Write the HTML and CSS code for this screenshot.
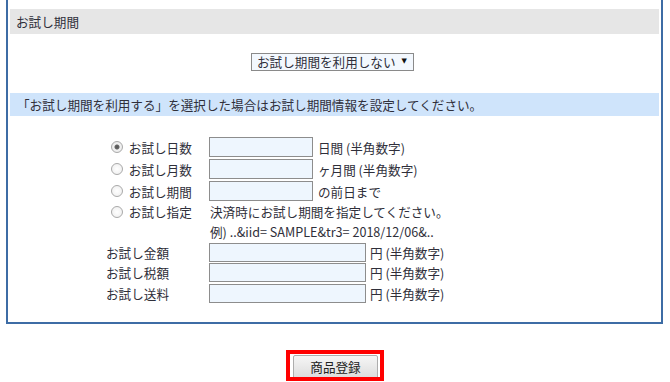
FILE: index.html
```html
<!DOCTYPE html>
<html lang="ja">
<head>
  <meta charset="UTF-8">
  <meta name="viewport" content="width=device-width, initial-scale=1.0">
  <title>お試し期間</title>
  <link rel="stylesheet" href="styles.css">
</head>
<body>
  <div class="panel">
    <div class="panel-head">お試し期間</div>

    <div class="select-row">
      <div class="select">
        <span>お試し期間を利用しない</span>
        <span class="arrow">▼</span>
      </div>
    </div>

    <div class="notice">「お試し期間を利用する」を選択した場合はお試し期間情報を設定してください。</div>

    <div class="form">
      <div class="row">
        <label class="opt"><input type="radio" name="trial" checked> お試し日数</label>
        <input class="field" type="text"><span class="unit">日間 (半角数字)</span>
      </div>
      <div class="row">
        <label class="opt"><input type="radio" name="trial"> お試し月数</label>
        <input class="field" type="text"><span class="unit">ヶ月間 (半角数字)</span>
      </div>
      <div class="row">
        <label class="opt"><input type="radio" name="trial"> お試し期間</label>
        <input class="field" type="text"><span class="unit">の前日まで</span>
      </div>
      <div class="row row-text">
        <label class="opt"><input type="radio" name="trial"> お試し指定</label>
        <div class="note">
          決済時にお試し期間を指定してください。<br>
          例) ..&amp;iid= SAMPLE&amp;tr3= 2018/12/06&amp;..
        </div>
      </div>
      <div class="row row-money">
        <span class="name">お試し金額</span>
        <input class="field wide" type="text"><span class="unit">円 (半角数字)</span>
      </div>
      <div class="row row-money">
        <span class="name">お試し税額</span>
        <input class="field wide" type="text"><span class="unit">円 (半角数字)</span>
      </div>
      <div class="row row-money">
        <span class="name">お試し送料</span>
        <input class="field wide" type="text"><span class="unit">円 (半角数字)</span>
      </div>
    </div>
  </div>

  <div class="actions">
    <span class="mark"><button class="btn">商品登録</button></span>
  </div>
</body>
</html>
```

FILE: styles.css
```css
body {
    margin: 0;
    font-family: "Noto Sans CJK JP", "Noto Sans", sans-serif;
    font-size: 12.6px;
    color: #2f2f3a;
    background-color: #ffffff;
}

.panel {
    margin-left: 6px;
    width: 657px;
    box-sizing: border-box;
    border: 2px solid #3d6ca5;
    border-top: none;
    padding: 9px 2px 18px;
}

.panel-head {
    height: 25px;
    line-height: 25px;
    padding-left: 6px;
    background-color: #e6e6e6;
}

.select-row {
    display: flex;
    justify-content: center;
    padding: 19px 4px 22px 0;
}

.select {
    display: flex;
    align-items: center;
    justify-content: space-between;
    width: 163px;
    height: 18px;
    box-sizing: border-box;
    padding: 0 6px 0 5px;
    border: 1px solid #8a8a8a;
    background-color: #f3f8fe;
    line-height: 16px;
}

.arrow {
    font-family: "DejaVu Sans", sans-serif;
    font-size: 7px;
    color: #111;
    margin-top: -2px;
}

.notice {
    height: 23px;
    line-height: 23px;
    padding-left: 7px;
    background-color: #cfe4fb;
}

.form {
    padding: 20px 0 0 96px;
}

.row {
    display: flex;
    align-items: center;
    height: 22px;
}

.row-text {
    align-items: flex-start;
    height: 40px;
    line-height: 20px;
}

.row-money {
    height: 20.5px;
}

.opt {
    display: flex;
    align-items: center;
    width: 103px;
    padding-left: 5px;
    box-sizing: border-box;
    white-space: pre;
}

.opt input {
    appearance: none;
    -webkit-appearance: none;
    width: 12px;
    height: 12px;
    margin: 0 3px 0 0;
    border: 1px solid #a9a9a9;
    border-radius: 50%;
    background: radial-gradient(circle, #ffffff 0%, #ececec 100%);
    box-sizing: border-box;
}

.opt input:checked {
    background: radial-gradient(circle, #555 0, #666 2px, #f2f2f2 3px, #e6e6e6 100%);
}

.name {
    width: 103px;
}

.field {
    width: 104px;
    height: 20px;
    margin: 0;
    padding: 0;
    box-sizing: border-box;
    border: 1px solid #8d8d8d;
    background-color: #eef6fe;
}

.row-money .field {
    height: 19px;
}

.field.wide {
    width: 157px;
}

.unit {
    margin-left: 5px;
}

.row-money .unit {
    margin-left: 4px;
}

.note {
    padding-left: 1px;
}

.actions {
    display: flex;
    justify-content: center;
    padding-top: 26px;
}

.mark {
    display: inline-block;
    border: 4px solid #ff0000;
    padding: 1px 2px 0 3px;
    height: 22px;
    overflow: hidden;
}

.btn {
    height: 24px;
    padding: 0 16px;
    font-family: "Noto Sans CJK JP", sans-serif;
    font-size: 12.6px;
    color: #222;
    border: 1px solid #adadad;
    border-radius: 2px;
    background: linear-gradient(#f6f6f6, #dcdcdc);
    cursor: pointer;
}
```
